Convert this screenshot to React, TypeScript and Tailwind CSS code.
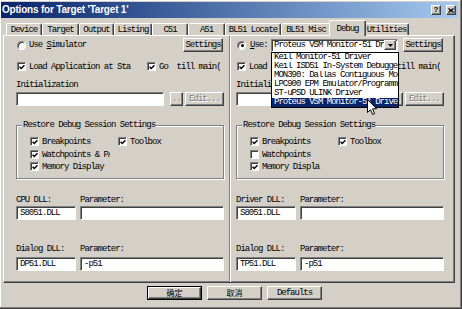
import React from "react";

const mono =
  "font-['Liberation_Mono','DejaVu_Sans_Mono',monospace] text-[9px] leading-[10px] tracking-[-1px] text-black";
const raised =
  "bg-[#d4d0c8] border border-t-white border-l-white border-r-[#404040] border-b-[#404040] shadow-[inset_-1px_-1px_0_#808080]";
const sunken =
  "border border-t-[#808080] border-l-[#808080] border-r-white border-b-white shadow-[inset_1px_1px_0_#404040]";

const drivers = [
  "Keil Monitor-51 Driver",
  "Keil ISD51 In-System Debugger",
  "MON390: Dallas Contiguous Mode",
  "LPC900 EPM Emulator/Programmer",
  "ST-uPSD ULINK Driver",
  "Proteus VSM Monitor-51 Driver",
];

function Check({ on = true }: { on?: boolean }) {
  return (
    <div className={`w-[9px] h-[9px] shrink-0 bg-white ${sunken} flex items-center justify-center`}>
      {on && (
        <svg width="7" height="7" viewBox="0 0 7 7" className="ml-px mt-px">
          <path d="M0.7 2.6 L2.6 4.6 L6.4 0.8" stroke="#000" strokeWidth="1.7" fill="none" />
        </svg>
      )}
    </div>
  );
}

function Radio({ on = false }: { on?: boolean }) {
  return (
    <div className={`w-[9px] h-[9px] shrink-0 rounded-full bg-white ${sunken} flex items-center justify-center`}>
      {on && <div className="w-[3px] h-[3px] rounded-full bg-black ml-px mt-px" />}
    </div>
  );
}

function Btn({
  children,
  className = "",
  disabled = false,
}: {
  children: React.ReactNode;
  className?: string;
  disabled?: boolean;
}) {
  return (
    <div
      className={`flex items-center justify-center shrink-0 ${raised} ${
        disabled ? "text-[#808080] [text-shadow:1px_1px_0_#fff]" : ""
      } ${className}`}
    >
      {children}
    </div>
  );
}

function Field({ children, className = "" }: { children?: React.ReactNode; className?: string }) {
  return (
    <div className={`flex items-center pl-[3px] bg-white ${sunken} overflow-hidden whitespace-nowrap shrink-0 ${className}`}>
      {children}
    </div>
  );
}

type Item = { label: string; on: boolean };

function GroupRow({ first, second, mt }: { first: Item; second?: Item; mt: string }) {
  return (
    <div className={`flex items-center h-[9px] ${mt}`}>
      <div className="ml-[13px]">
        <Check on={first.on} />
      </div>
      <span className="ml-[3px] w-[68px] overflow-hidden whitespace-nowrap">{first.label}</span>
      {second && (
        <>
          <div className="ml-[8px]">
            <Check on={second.on} />
          </div>
          <span className="ml-[3px] whitespace-nowrap">{second.label}</span>
        </>
      )}
    </div>
  );
}

function Column({ right = false }: { right?: boolean }) {
  return (
    <div className={`w-[208px] shrink-0 flex flex-col mt-[2px] ${mono}`}>
      <div className="h-[14px] flex items-center">
        {right ? (
          <>
            <div className="ml-px">
              <Radio on />
            </div>
            <span className="ml-[4px] w-[21px]">
              <u>U</u>se:
            </span>
            <div className="relative w-[127px] h-[13px]">
              <div className={`h-full bg-white ${sunken} flex items-center pl-[2px] pr-px`}>
                <span className="flex-1 overflow-hidden whitespace-nowrap">Proteus VSM Monitor-51 Driver</span>
                <div className={`w-[12px] h-[10px] ${raised} flex items-center justify-center`}>
                  <svg width="5" height="3" viewBox="0 0 5 3">
                    <path d="M0 0h5L2.5 3z" fill="#000" />
                  </svg>
                </div>
              </div>
              <div className="absolute left-0 top-[13px] w-[128px] border border-black bg-white z-20">
                {drivers.map((d, i) => (
                  <div
                    key={d}
                    className={`h-[9px] leading-[9px] pl-[2px] overflow-hidden whitespace-nowrap ${
                      i === drivers.length - 1 ? "bg-[#0a246a] text-white" : ""
                    }`}
                  >
                    {d}
                  </div>
                ))}
              </div>
            </div>
          </>
        ) : (
          <>
            <div className="ml-px">
              <Radio />
            </div>
            <span className="ml-[3px]">
              Use <u>S</u>imulator
            </span>
          </>
        )}
        <Btn className="ml-auto mr-px w-[40px] h-[14px]">Settings</Btn>
      </div>

      <div className="mt-[10px] h-[9px] flex items-center">
        <div className="ml-px">
          <Check />
        </div>
        <span className="ml-[3px] w-[102px] overflow-hidden whitespace-nowrap">Load Application at Startup</span>
        <div className="ml-[16px]">
          <Check />
        </div>
        <span className="ml-[3px] w-[61px] overflow-hidden whitespace-pre">Go  till main()</span>
      </div>

      <div className="mt-[9px] h-[10px]">Initialization</div>
      <div className="mt-[2px] h-[14px] flex">
        <Field className="w-[148px] h-full" />
        <Btn disabled className="ml-[6px] w-[13px] h-full">
          ..
        </Btn>
        <Btn disabled className="ml-[2px] w-[39px] h-full">
          Edit...
        </Btn>
      </div>

      <div className="relative mt-[19px] h-[54px] border border-[#808080] shadow-[1px_1px_0_#fff,inset_1px_1px_0_#fff]">
        <span className="absolute -top-[6px] left-[5px] px-px bg-[#d4d0c8] whitespace-nowrap">
          Restore Debug Session Settings
        </span>
        <GroupRow mt="mt-[11px]" first={{ label: "Breakpoints", on: true }} second={{ label: "Toolbox", on: true }} />
        <GroupRow mt="mt-[4px]" first={right ? { label: "Watchpoints", on: false } : { label: "Watchpoints & PA", on: true }} />
        <GroupRow mt="mt-[3px]" first={{ label: right ? "Memory Displa" : "Memory Display", on: true }} />
      </div>

      <div className="mt-[16px] h-[10px] flex">
        <span className="w-[64px]">{right ? "Driver DLL:" : "CPU DLL:"}</span>
        <span>Parameter:</span>
      </div>
      <div className="mt-px h-[14px] flex gap-[4px]">
        <Field className="w-[60px] h-full">S8051.DLL</Field>
        <Field className="w-[144px] h-full" />
      </div>

      <div className="mt-[24px] h-[10px] flex">
        <span className="w-[64px]">Dialog DLL:</span>
        <span>Parameter:</span>
      </div>
      <div className="mt-[3px] h-[14px] flex gap-[4px]">
        <Field className="w-[60px] h-full">{right ? "TP51.DLL" : "DP51.DLL"}</Field>
        <Field className="w-[144px] h-full">-p51</Field>
      </div>
    </div>
  );
}

const tabs: [string, string][] = [
  ["Device", "w-[36px]"],
  ["Target", "w-[37px]"],
  ["Output", "w-[35px]"],
  ["Listing", "w-[38px]"],
  ["C51", "w-[36px]"],
  ["A51", "w-[37px]"],
  ["BL51 Locate", "w-[56px]"],
  ["BL51 Misc", "w-[50px]"],
  ["Debug", "w-[37px]"],
  ["Utilities", "w-[45px]"],
];

export default function App() {
  return (
    <div className="relative w-[462px] h-[309px] overflow-hidden bg-[#d4d0c8] pl-px pt-[2px] border-r border-b border-r-[#404040] border-b-[#404040] shadow-[inset_-1px_-1px_0_#808080,inset_1px_1px_0_#fff]">
      {/* title bar */}
      <div className="w-[457px] h-[16px] flex items-center bg-gradient-to-r from-[#0a246a] to-[#a6caf0] pl-px pr-[2px]">
        <span className="font-['Liberation_Sans',Arial,sans-serif] font-bold text-[10px] tracking-[-0.2px] text-white leading-none">
          Options for Target 'Target 1'
        </span>
        <div className="ml-auto flex gap-[5px]">
          <Btn className="w-[10px] h-[10px] font-['Liberation_Sans',sans-serif] font-bold text-[8px] leading-none">?</Btn>
          <Btn className="w-[10px] h-[10px]">
            <svg width="6" height="5" viewBox="0 0 6 5">
              <path d="M0.5 0.5 L5.5 4.5 M5.5 0.5 L0.5 4.5" stroke="#000" strokeWidth="1.3" />
            </svg>
          </Btn>
        </div>
      </div>

      {/* tabs */}
      <div className={`ml-[5px] mt-[2px] h-[15px] flex items-end ${mono}`}>
        {tabs.map(([t, w]) =>
          t === "Debug" ? (
            <div
              key={t}
              className={`${w} h-[16px] -mb-px relative z-10 -mx-[2px] flex items-start justify-center pt-[3px] bg-[#d4d0c8] border-t border-l border-t-white border-l-white border-r border-r-[#404040] shadow-[inset_-1px_0_0_#808080] rounded-t-[2px]`}
            >
              {t}
            </div>
          ) : (
            <div
              key={t}
              className={`${w} h-[12px] flex items-center justify-center border-t border-l border-t-white border-l-white border-r border-r-[#404040] shadow-[inset_-1px_0_0_#808080] rounded-t-[2px] whitespace-nowrap`}
            >
              {t}
            </div>
          )
        )}
      </div>

      {/* tab panel */}
      <div className="ml-[2px] w-[452px] h-[248px] flex pl-[12px] border border-t-white border-l-white border-r-[#404040] border-b-[#404040] shadow-[inset_-1px_-1px_0_#808080]">
        <Column />
        <div className="ml-[5px] mr-[5px] w-[2px] self-stretch border-l border-l-[#808080] border-r border-r-white" />
        <Column right />
      </div>

      {/* dialog buttons */}
      <div className="mt-[3px] ml-[146px] h-[14px] flex gap-[5px]">
        <div className="w-[55px] h-full border border-black flex">
          <Btn className="w-full h-full font-['Noto_Sans_CJK_SC','Noto_Sans',sans-serif] text-[8px] leading-none">确定</Btn>
        </div>
        <Btn className="w-[55px] h-full font-['Noto_Sans_CJK_SC','Noto_Sans',sans-serif] text-[8px] leading-none">取消</Btn>
        <Btn className={`w-[55px] h-full ${mono}`}>Defaults</Btn>
      </div>

      {/* mouse pointer over the open list */}
      <svg className="absolute left-[367px] top-[99px] z-30" width="11" height="17" viewBox="0 0 11 17">
        <path d="M0.5 0.5 V13.5 L3.5 10.7 L5.6 15.5 L7.6 14.6 L5.6 9.8 H9.6 Z" fill="#fff" stroke="#000" />
      </svg>
    </div>
  );
}
